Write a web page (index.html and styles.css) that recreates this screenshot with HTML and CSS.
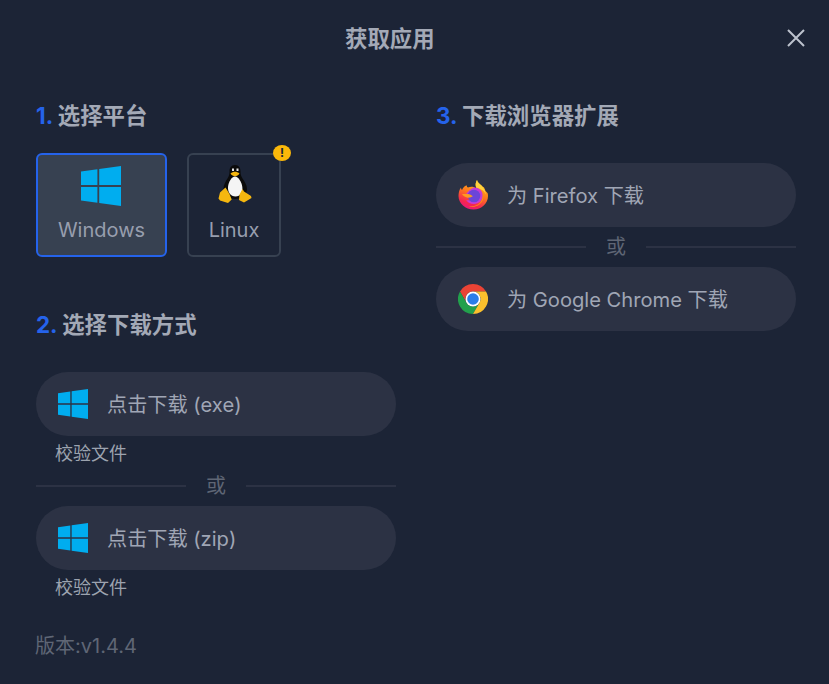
FILE: index.html
```html
<!DOCTYPE html>
<html lang="zh">
<head>
<meta charset="utf-8">
<title>获取应用</title>
<link rel="stylesheet" href="styles.css">
</head>
<body>
<svg class="defs" width="0" height="0">
  <defs>
    <symbol id="win" viewBox="0 0 40 40">
      <path d="M0 5.600 16.400 3.300V19H0ZM18.200 3 40 0V19H18.200ZM0 21H16.400V36.700L0 34.400ZM18.200 21H40V40L18.200 37Z"/>
    </symbol>
  </defs>
</svg>
<main class="modal">
  <header class="head">
    <h1 class="title">获取应用</h1>
    <button class="close" aria-label="关闭">
      <svg viewBox="0 0 20 20" width="20" height="20"><path d="M2 2 18 18M18 2 2 18"/></svg>
    </button>
  </header>
  <div class="cols">
    <section class="col">
      <h2 class="step"><span class="num">1.</span> 选择平台</h2>
      <div class="platforms">
        <div class="plat active">
          <svg class="win-lg"><use href="#win"/></svg>
          <span>Windows</span>
        </div>
        <div class="plat linux">
          <span class="badge">!</span>
          <svg class="tux" viewBox="0 0 34 40" width="34" height="40">
            <path fill="#0b0b0b" d="M17 1c-4 0-5.500 3-5.500 6.500 0 3-.5 4.500-2 7C7.500 17.500 5.500 21 5.500 25c0 5 4.500 10 11.500 10s12-5 12-10c0-4-2.500-7.500-4.500-10.500-1.500-2.500-2-4-2-7C22.500 4 21 1 17 1Z"/>
            <path fill="#f4f4f4" d="M17 12.500c-3.500 0-6.500 5.500-7 10.500-.4 5 2.500 9.500 7.500 9.500 5 0 7.500-4.500 6.800-9.500-.7-5-3.800-10.500-7.300-10.500Z"/>
            <path fill="#f5b70f" d="M12.500 9.500c1-1.200 3.500-1.800 4.500-1.800s3.500.6 4.500 1.800c-1 1.800-3 2.700-4.500 2.700s-3.500-.9-4.500-2.700Z"/>
            <path fill="#e8e8e8" d="M14 4.500h2v2.500h-2ZM18.500 4.500h2v2.500h-2Z"/>
            <path fill="#f5b70f" d="M7.500 23.500l4 6.500 2.200 5.500-3.700 3.500-8-2.500-1.500-2 1.500-6ZM24.500 25l1.500 2.500 7 4.500.5 2-7.500 4.500-5-2.500.5-5.500Z"/>
          </svg>
          <span>Linux</span>
        </div>
      </div>
      <h2 class="step step2"><span class="num">2.</span> 选择下载方式</h2>
      <a class="pill">
        <svg class="win-sm"><use href="#win"/></svg>
        <span class="label">点击下载 (exe)</span>
      </a>
      <a class="verify">校验文件</a>
      <div class="or"><span>或</span></div>
      <a class="pill">
        <svg class="win-sm"><use href="#win"/></svg>
        <span class="label">点击下载 (zip)</span>
      </a>
      <a class="verify">校验文件</a>
      <p class="version">版本:v1.4.4</p>
    </section>
    <section class="col">
      <h2 class="step step3"><span class="num">3.</span> 下载浏览器扩展</h2>
      <a class="pill">
        <svg class="brand" viewBox="0 0 30 30" width="30" height="30">
          <defs>
            <linearGradient id="ff" x1="0.7" y1="0" x2="0.3" y2="1">
              <stop offset="0" stop-color="#ffc21e"/>
              <stop offset=".45" stop-color="#ff7a1c"/>
              <stop offset=".8" stop-color="#f4264f"/>
              <stop offset="1" stop-color="#e6167f"/>
            </linearGradient>
          </defs>
          <path fill="url(#ff)" d="M19 0c.5 2.500 2.500 3.500 4.500 5.500 1 1 1.500 1.500 2.500 2 .5 1 1 2 1.500 3.500L29.500 13c.5 1 .5 2.500.5 3 0 7.500-6.500 13.500-14.500 13.500S.5 23.500.5 16c0-2.500.5-6 2.500-8.500 0 1 .5 2 1 2.500C5 7.500 7 5.500 9 5.500c0 1-.5 1.500 1 2 2-1 4-1 5.500-.5 1 .5 2 1 3 1.500C17 5.500 17.500 2.500 19 0Z"/>
          <path fill="#ffd23c" d="M19 0c.5 2.500 2.500 3.500 4.500 5.500 2.500 2.500 4 6 4.500 9-2-4-5-6-9.500-6.500C17 5.500 17.500 2.500 19 0Z"/>
          <path fill="#c63bd6" d="M15.500 7.500c5-.5 9 3 9.200 7.500.2 5-3.700 9-9 9-3 0-6-1.500-7.500-4 2 .6 4 .5 5.500-.5-2-.5-2-2-1.500-3-1-.5-3-1-4-2.500 2-3 4-5 7.800-6.500Z"/>
          <circle cx="16" cy="16" r="6.300" fill="#6b45d8"/>
          <path fill="#ff9a1f" d="M4 14c3 .5 6-1 9 1 1 .6 1.500 1 2 1-2 1.500-4 2-6 1.500C7 17 5 16 4 14Z"/>
          <path fill="#ff8a1a" d="M24.700 13c1.500 4 .5 9-4 12-3 2-7 2.300-10 1 5 .5 9-.5 11.500-3.500 2-2.500 3-6 2.500-9.500Z"/>
        </svg>
        <span class="label">为 Firefox 下载</span>
      </a>
      <div class="or or-ext"><span>或</span></div>
      <a class="pill">
        <svg class="brand" viewBox="0 0 30 30" width="30" height="30">
          <path fill="#ea4335" d="M15 0A15 15 0 0 1 28 7.500H15A7.500 7.500 0 0 0 8.500 18.750L2 7.500A15 15 0 0 1 15 0Z"/>
          <path fill="#22a04c" d="M2 7.500 8.500 18.750A7.500 7.500 0 0 0 21.500 18.750L15 30A15 15 0 0 1 2 7.500Z"/>
          <path fill="#fbc02d" d="M15 30 21.500 18.750A7.500 7.500 0 0 0 15 7.500H28A15 15 0 0 1 15 30Z"/>
          <circle cx="15" cy="15" r="7.500" fill="#fff"/>
          <circle cx="15" cy="15" r="5.800" fill="#2a7de9"/>
        </svg>
        <span class="label">为 Google Chrome 下载</span>
      </a>
    </section>
  </div>
</main>
</body>
</html>
```
FILE: styles.css
```css
* { box-sizing: border-box; }
html, body { margin: 0; height: 100%; }
body {
  background: #1c2436;
  color: #9ca3af;
  font-family: Inter, "Noto Sans CJK SC", sans-serif;
  font-size: 20px;
  overflow: hidden;
}
.defs { display: block; position: absolute; }
.modal { padding: 0 33px 0 36px; }
.head {
  display: flex;
  align-items: center;
  justify-content: space-between;
  height: 78px;
  padding-left: 309px;
}
.title {
  margin: 0;
  font-size: 22.4px;
  font-weight: 700;
  color: #a3a9b6;
  line-height: 30px;
}
.close {
  border: 0;
  background: none;
  padding: 0;
  width: 20px;
  height: 20px;
  margin: -3px -10px 0 0;
}
.close svg { display: block; }
.close path { fill: none; stroke: #bcc2cd; stroke-width: 2; }
.cols {
  display: grid;
  grid-template-columns: 360px 360px;
  column-gap: 40px;
}
.step {
  margin: 0;
  height: 76px;
  padding-top: 23px;
  font-size: 22.4px;
  line-height: 30px;
  font-weight: 700;
  color: #a3a9b6;
}
.step3 { height: 85px; }
.num { color: #2563eb; }
.platforms { display: flex; gap: 20px; margin-top: -1px; }
.plat {
  position: relative;
  display: flex;
  flex-direction: column;
  align-items: center;
  height: 104px;
  border: 2px solid #374151;
  border-radius: 6px;
  color: #979eae;
  line-height: 28px;
}
.plat.active {
  width: 131px;
  padding-top: 11px;
  border-color: #2563eb;
  background: #374151;
}
.plat.linux { width: 94px; padding-top: 9px; }
.plat.active span { margin-top: 10px; }
.plat.linux span:last-child { margin-top: 12px; }
.win-lg { width: 40px; height: 40px; fill: #00adef; margin-right: 1px; }
.tux { margin-left: 1px; }
.win-sm { width: 30px; height: 30px; fill: #00adef; flex: none; }
.badge {
  position: absolute;
  top: -10px;
  right: -12px;
  width: 18px;
  height: 16px;
  border-radius: 50%;
  background: #fbb80a;
  color: #1c2436;
  font-size: 12px;
  font-weight: 700;
  line-height: 16px;
  text-align: center;
}
.step2 { margin-top: 34px; height: 81px; padding-top: 19px; }
.pill {
  display: flex;
  align-items: center;
  gap: 19px;
  height: 64px;
  padding-left: 22px;
  border-radius: 32px;
  background: #2c3244;
  color: #a0a6b5;
}
.label { margin-bottom: 2px; font-size: 20.15px; }
.brand { flex: none; }
.verify {
  display: block;
  padding: 1px 0 0 19px;
  font-size: 18px;
  line-height: 34px;
  color: #9ca3af;
}
.or {
  display: flex;
  align-items: center;
  gap: 20px;
  height: 36px;
  margin: -3px 0 2px;
  color: #5f6675;
  line-height: 36px;
}
.or::before, .or::after {
  content: "";
  flex: 1;
  height: 2px;
  background: #2c3244;
}
.or-ext { height: 40px; margin: 0; }
.version {
  margin: 27px 0 0 -1px;
  color: #5f6675;
  line-height: 28px;
}
```
